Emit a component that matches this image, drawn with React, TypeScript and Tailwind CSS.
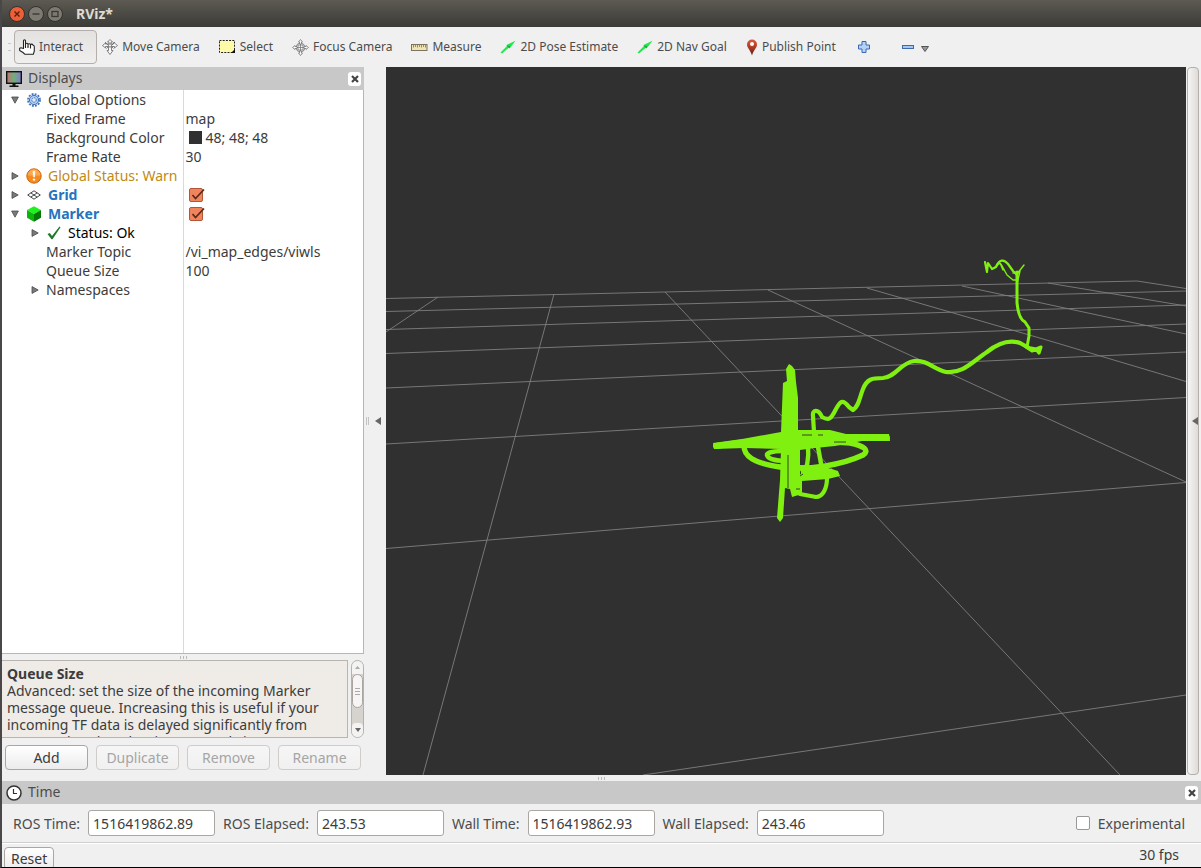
import { useState } from "react";
import type { ReactNode } from "react";

type Row = {
  name: string;
  value?: string;
  indent?: "root" | "child" | "leaf";
  arrow?: "open" | "closed";
  icon?: ReactNode;
  color?: string;
  swatch?: boolean;
  checkbox?: boolean;
};

/* ---------- Icons ---------- */

function HandIcon() {
  return (
    <svg width="16" height="16" viewBox="0 0 16 16" fill="#fff" stroke="#222" strokeWidth="1.1" strokeLinejoin="round">
      <path d="M4.5 9.500V1.800a1 1 0 0 1 2 0V6.500V5.500a1.200 1.200 0 0 1 2.500 0V7V6a1.200 1.200 0 0 1 2.500 0V7.500V6.500a1.200 1.200 0 0 1 2.500-.2c1 0 1.300.5 1.300 1.500V12l-1 3.300H6L4 13.500L.7 11.500L.6 9.300L2 8.800Z" />
      <path d="M6.500 6.500v2.500M9 7v2M11.500 7.500v2" />
    </svg>
  );
}

function MoveIcon() {
  return (
    <svg width="16" height="16" viewBox="0 0 16 16" fill="#f8f8f8" stroke="#666" strokeWidth="0.8">
      <path d="M8 .5l2.500 2.500H9v2h2.500V3.500L12.500 4l3 2.500L12.500 9V7.500H9.500v4H11L8 15.500L5 11.500h1.500v-4h-3V9L.5 6.500L3.500 4v1H7V3H5.500Z" />
      <path d="M5 5l3 3l3-3M3 3l2 2M13 3l-2 2M4.500 9.500l2-2M11.500 9.500l-2-2" fill="none" />
      <circle cx="8" cy="6.500" r="1.600" />
    </svg>
  );
}

function SelectIcon() {
  return (
    <svg width="17" height="14" viewBox="0 0 17 14">
      <rect x="0.500" y="0.500" width="15" height="12" fill="#fdfba8" />
      <rect x="0.500" y="0.500" width="15" height="12" fill="none" stroke="#222" strokeDasharray="2 1.200" />
      <path d="M12 13h4V9Z" fill="#111" />
    </svg>
  );
}

function FocusIcon() {
  return (
    <svg width="17" height="17" viewBox="0 0 17 17" fill="#fafafa" stroke="#777" strokeWidth="0.8">
      <circle cx="8.500" cy="8.500" r="4.500" />
      <path d="M8.500 4.500v8M4.500 8.500h8M6 5.500v6M11 5.500v6M5.500 6h6M5.500 11h6" />
      <path d="M8.500 .5l2 2.500h-1v2h-2V3h-1ZM8.500 16.500l2-2.500h-1v-2h-2v2h-1ZM.5 8.500l2.500-2v1h2v2H3v1ZM16.500 8.500l-2.500-2v1h-2v2h2v1Z" />
    </svg>
  );
}

function RulerIcon() {
  return (
    <svg width="17" height="7" viewBox="0 0 17 7">
      <rect x="0.500" y="0.500" width="15.500" height="6" fill="#f2e3b4" stroke="#7c7462" />
      <path d="M2.500 1v2.500M4.500 1v2M6.500 1v2.500M8.500 1v2M10.500 1v2.500M12.500 1v2M14.500 1v2.500" stroke="#7c7462" strokeWidth="0.8" />
    </svg>
  );
}

function ArrowIcon() {
  return (
    <svg width="16" height="14" viewBox="0 0 16 14">
      <path d="M.5 12.500L7 6L6.500 5L15.500 .8L10 8L9 7.500L2 13.500Z" fill="#1fe84b" />
      <path d="M6.500 5.500L9.500 8.500L10 6Z" fill="#12a834" />
    </svg>
  );
}

function PinIcon() {
  return (
    <svg width="12" height="17" viewBox="0 0 12 17">
      <defs>
        <linearGradient id="pin" x1="0" y1="0" x2="0" y2="1">
          <stop offset="0" stopColor="#e0573c" />
          <stop offset="0.550" stopColor="#a63a22" />
          <stop offset="1" stopColor="#4b1a0e" />
        </linearGradient>
      </defs>
      <path d="M6 .5a5 5 0 0 1 5 5C11 9 7.500 11 6 16.500C4.500 11 1 9 1 5.500a5 5 0 0 1 5-5Z" fill="url(#pin)" />
      <circle cx="6" cy="5" r="2" fill="#fff" />
    </svg>
  );
}

function PlusIcon() {
  return (
    <svg width="12" height="12" viewBox="0 0 12 12">
      <path d="M4 .5h4V4h3.500v4H8v3.500H4V8H.5V4H4Z" fill="#b4d2f6" stroke="#3a67b8" />
    </svg>
  );
}

function MinusIcon() {
  return (
    <svg width="12" height="4" viewBox="0 0 12 4">
      <rect x="0.500" y="0.500" width="11" height="3" fill="#a4c6f0" stroke="#3f6aae" />
    </svg>
  );
}

function MonitorIcon() {
  return (
    <svg width="16" height="16" viewBox="0 0 16 16">
      <defs>
        <linearGradient id="screen">
          <stop offset="0" stopColor="#c87070" />
          <stop offset="0.500" stopColor="#6fae7c" />
          <stop offset="1" stopColor="#857ad0" />
        </linearGradient>
      </defs>
      <rect x="0.700" y="0.700" width="14.600" height="11.600" fill="url(#screen)" stroke="#111" strokeWidth="1.400" />
      <path d="M6.500 12.500h3v2h3V16h-9v-1.500h3Z" fill="#111" />
    </svg>
  );
}

function ClockIcon() {
  return (
    <svg width="16" height="16" viewBox="0 0 16 16" fill="#fff" stroke="#333">
      <circle cx="8" cy="8" r="7" strokeWidth="1.500" />
      <path d="M7.500 4v4.500H11" strokeWidth="1.200" />
    </svg>
  );
}

function GearIcon() {
  return (
    <svg width="14" height="14" viewBox="0 0 14 14" fill="none" stroke="#4273b8">
      <circle cx="7" cy="7" r="6" strokeWidth="1.800" strokeDasharray="1.900 1.240" />
      <circle cx="7" cy="7" r="4.600" fill="#aecbf0" />
      <circle cx="7" cy="7" r="2.200" fill="#dfeafa" strokeDasharray="1.500 0.800" />
    </svg>
  );
}

function WarnIcon() {
  return (
    <svg width="16" height="16" viewBox="0 0 16 16">
      <circle cx="8" cy="8" r="7.200" fill="#f58a1f" stroke="#c9660c" />
      <path d="M1.800 7.500a6.200 6.200 0 0 1 12.400 0Z" fill="#fba94e" />
      <path d="M7 3.200h2L8.600 9H7.400Z" fill="#fff" stroke="#fff" strokeWidth="0.500" />
      <circle cx="8" cy="11.600" r="1.200" fill="#fff" />
    </svg>
  );
}

function GridIcon() {
  return (
    <svg width="14" height="10" viewBox="0 0 14 10" fill="none" stroke="#333" strokeWidth="0.900">
      <path d="M7 .8L13.300 5L7 9.200L.7 5ZM3.800 2.900L10.200 7.100M10.200 2.900L3.800 7.100" />
    </svg>
  );
}

function CubeIcon() {
  return (
    <svg width="16" height="16" viewBox="0 0 16 16">
      <path d="M8 .3L15 4L8 8L1 4Z" fill="#1ff01f" />
      <path d="M1 4L8 8V15.700L1 11.700Z" fill="#0bb50b" />
      <path d="M15 4L8 8V15.700L15 11.700Z" fill="#067806" />
    </svg>
  );
}

function CheckIcon() {
  return (
    <svg width="14" height="14" viewBox="0 0 14 14">
      <path d="M.5 8L2.800 7L5 10L12.500 .6L13.500 1.300L5.500 13.300H4.500Z" fill="#1d7a26" />
    </svg>
  );
}

function TreeArrow({ open }: { open: boolean }) {
  return (
    <svg width="8" height="8" viewBox="0 0 8 8" fill="#7a7a7a" stroke="#4a4a4a" strokeWidth="0.800">
      {open ? <path d="M.6 1h6.800L4 7.200Z" /> : <path d="M1 .6v6.800L7.200 4Z" />}
    </svg>
  );
}

function LeftTriangle() {
  return (
    <svg width="6" height="8" viewBox="0 0 6 8">
      <path d="M6 0v8L0 4Z" fill="#666" />
    </svg>
  );
}

/* ---------- Small parts ---------- */

function CloseButton({ label }: { label: string }) {
  return (
    <button aria-label={label} className="flex h-[14px] w-[13px] items-center justify-center rounded-[3px] bg-white">
      <svg width="8" height="8" viewBox="0 0 8 8" stroke="#444" strokeWidth="2.200">
        <path d="M1 1l6 6M7 1L1 7" />
      </svg>
    </button>
  );
}

function DockHeader({ icon, title }: { icon: ReactNode; title: string }) {
  return (
    <div className="flex items-center bg-[#c8c8c8] py-px pr-[3px] pl-1">
      {icon}
      <h2 className="ml-1.5 flex-1 pb-px text-[14px] leading-5 text-[#4c4c4c]">{title}</h2>
      <CloseButton label={`Close ${title}`} />
    </div>
  );
}

function RowCheckbox({ label }: { label: string }) {
  const [checked, setChecked] = useState(true);
  return (
    <span className="relative ml-[3px] block h-[14px] w-[14px]">
      <input
        type="checkbox"
        aria-label={label}
        checked={checked}
        onChange={() => setChecked(!checked)}
        className="block h-[14px] w-[14px] appearance-none rounded-[2px] border border-[#b0563a] bg-[#f0845c]"
      />
      {checked && (
        <svg className="pointer-events-none absolute top-0 left-0 overflow-visible" width="16" height="14" viewBox="0 0 16 14">
          <path d="M3.500 7L6.500 10.500L15 1.500" fill="none" stroke="#5e2a1a" strokeWidth="1.800" />
        </svg>
      )}
    </span>
  );
}

const tools = [
  { name: "Interact", icon: <HandIcon /> },
  { name: "Move Camera", icon: <MoveIcon /> },
  { name: "Select", icon: <SelectIcon /> },
  { name: "Focus Camera", icon: <FocusIcon /> },
  { name: "Measure", icon: <RulerIcon /> },
  { name: "2D Pose Estimate", icon: <ArrowIcon /> },
  { name: "2D Nav Goal", icon: <ArrowIcon /> },
  { name: "Publish Point", icon: <PinIcon /> },
];

const rows: Row[] = [
  { name: "Global Options", arrow: "open", icon: <GearIcon /> },
  { name: "Fixed Frame", value: "map", indent: "leaf" },
  { name: "Background Color", value: "48; 48; 48", indent: "leaf", swatch: true },
  { name: "Frame Rate", value: "30", indent: "leaf" },
  { name: "Global Status: Warn", arrow: "closed", icon: <WarnIcon />, color: "text-[#c08a14]" },
  { name: "Grid", arrow: "closed", icon: <GridIcon />, color: "font-bold text-[#2673bd]", checkbox: true },
  { name: "Marker", arrow: "open", icon: <CubeIcon />, color: "font-bold text-[#2673bd]", checkbox: true },
  { name: "Status: Ok", arrow: "closed", indent: "child", icon: <CheckIcon />, color: "text-black" },
  { name: "Marker Topic", value: "/vi_map_edges/viwls", indent: "leaf" },
  { name: "Queue Size", value: "100", indent: "leaf" },
  { name: "Namespaces", arrow: "closed", indent: "child" },
];

const times = [
  { label: "ROS Time:", value: "1516419862.89" },
  { label: "ROS Elapsed:", value: "243.53" },
  { label: "Wall Time:", value: "1516419862.93" },
  { label: "Wall Elapsed:", value: "243.46" },
];

/* ---------- Sections ---------- */

function TitleBar() {
  return (
    <header className="flex h-[27px] shrink-0 items-center gap-[3px] bg-linear-to-b from-[#5c5a52] to-[#3c3b37] pl-[7px]">
      <button aria-label="Close window">
        <svg width="16" height="16" viewBox="0 0 16 16">
          <circle cx="8" cy="8" r="7.500" fill="#ec5f38" stroke="#33312d" />
          <path d="M5.500 5.500l5 5M10.500 5.500l-5 5" stroke="#5a1f0c" strokeWidth="1.400" />
        </svg>
      </button>
      <button aria-label="Minimize">
        <svg width="16" height="16" viewBox="0 0 16 16">
          <circle cx="8" cy="8" r="7.500" fill="#7d7a71" stroke="#33312d" />
          <path d="M4.500 8h7" stroke="#3a3934" strokeWidth="1.400" />
        </svg>
      </button>
      <button aria-label="Maximize">
        <svg width="16" height="16" viewBox="0 0 16 16">
          <circle cx="8" cy="8" r="7.500" fill="#7d7a71" stroke="#33312d" />
          <rect x="5" y="5.500" width="6" height="5" fill="none" stroke="#3a3934" strokeWidth="1.300" />
        </svg>
      </button>
      <h1 className="ml-2.5 text-[14px] font-bold text-[#dfdbd2]">RViz*</h1>
    </header>
  );
}

function Toolbar() {
  const [active, setActive] = useState("Interact");
  return (
    <div className="flex h-10 shrink-0 items-center pl-1.5">
      <span className="mr-[3px] h-2 w-[3px] border-y border-[#c8c8c8]" />
      {tools.map((tool) => (
        <button
          key={tool.name}
          aria-pressed={active === tool.name}
          onClick={() => setActive(tool.name)}
          className={`flex h-[34px] items-center gap-1 rounded-[4px] border pr-[13px] pl-1 text-[12px] whitespace-nowrap text-[#4c4c4c] ${
            active === tool.name ? "border-[#b4afaa] bg-linear-to-b from-[#e4e2e0] to-[#f0efee]" : "border-transparent"
          }`}
        >
          {tool.icon}
          {tool.name}
        </button>
      ))}
      <button aria-label="Add tool" className="flex h-[34px] items-center px-2">
        <PlusIcon />
      </button>
      <button aria-label="Remove tool" className="ml-4 flex h-[34px] items-center gap-[7px] px-2">
        <MinusIcon />
        <svg className="mt-1" width="8" height="6" viewBox="0 0 8 6">
          <path d="M.5 .5h7L4 5.500Z" fill="#999" stroke="#555" />
        </svg>
      </button>
    </div>
  );
}

function DisplayTree() {
  return (
    <div className="min-h-0 flex-1 overflow-hidden border-r border-b border-[#b6b6b6] bg-white">
      <table className="h-full w-full table-fixed border-collapse text-left text-[14px] leading-[19px] text-[#3c3c3c]">
        <colgroup>
          <col className="w-[181px]" />
          <col />
        </colgroup>
        <tbody>
          {rows.map((row) => (
            <tr key={row.name} className="h-[19px]">
              <th scope="row" className="border-r border-[#dadada] p-0 font-normal">
                <div
                  className={`flex h-[19px] items-center whitespace-nowrap ${
                    row.indent === "leaf" ? "pl-11" : row.indent === "child" ? "pl-[29px]" : "pl-[9px]"
                  }`}
                >
                  {row.arrow && <TreeArrow open={row.arrow === "open"} />}
                  {row.icon && <span className="ml-1.5 flex w-[18px] justify-center">{row.icon}</span>}
                  <span className={`${row.arrow ? (row.icon ? "ml-[5px]" : "ml-[7px]") : ""} ${row.color ?? ""}`}>
                    {row.name}
                  </span>
                </div>
              </th>
              <td className="p-0 pl-0.5">
                {row.checkbox && <RowCheckbox label={`Enable ${row.name}`} />}
                {row.value && (
                  <span className="flex h-[19px] items-center">
                    {row.swatch && <span className="mr-1 ml-[3px] h-[13px] w-[13px] bg-[#303030]" />}
                    {row.value}
                  </span>
                )}
              </td>
            </tr>
          ))}
          <tr>
            <td className="border-r border-[#dadada]" />
            <td />
          </tr>
        </tbody>
      </table>
    </div>
  );
}

function Description() {
  return (
    <div className="flex h-[78px] shrink-0 gap-[3px]">
      <div className="flex-1 overflow-hidden border border-l-0 border-[#b9b4af] bg-[#efebe7] pt-1 pl-[5px] text-[14px] leading-[17px] whitespace-nowrap text-[#3c3c3c]">
        <h3 className="font-bold">Queue Size</h3>
        <p>
          Advanced: set the size of the incoming Marker
          <br />
          message queue. Increasing this is useful if your
          <br />
          incoming TF data is delayed significantly from
          <br />
          your Marker data, but it can greatly increase
        </p>
      </div>
      <div className="flex w-[13px] flex-col items-center overflow-hidden rounded-full border border-[#b5b1ad] bg-[#d6d2ce]">
        <span className="flex h-[13px] w-full items-center justify-center bg-[#f4f3f2]">
          <svg width="5" height="3" viewBox="0 0 5 3">
            <path d="M0 3h5L2.500 0Z" fill="#aaa" />
          </svg>
        </span>
        <span className="flex h-[34px] w-full flex-col items-center justify-center gap-0.5 rounded-full border border-[#a9a5a1] bg-[#f6f5f4]">
          <span className="h-px w-[5px] bg-[#aaa]" />
          <span className="h-px w-[5px] bg-[#aaa]" />
          <span className="h-px w-[5px] bg-[#aaa]" />
        </span>
        <span className="mt-auto flex h-[14px] w-full items-center justify-center rounded-t-[4px] bg-[#f4f3f2]">
          <svg width="6" height="4" viewBox="0 0 6 4">
            <path d="M0 0h6L3 4Z" fill="#666" />
          </svg>
        </span>
      </div>
    </div>
  );
}

function DisplaysPanel() {
  return (
    <aside className="flex w-[362px] shrink-0 flex-col">
      <DockHeader icon={<MonitorIcon />} title="Displays" />
      <DisplayTree />
      <div className="flex h-1.5 shrink-0 items-center justify-center gap-0.5">
        <span className="h-[3px] w-px bg-[#bbb]" />
        <span className="h-[3px] w-px bg-[#bbb]" />
        <span className="h-[3px] w-px bg-[#bbb]" />
      </div>
      <Description />
      <div className="grid shrink-0 grid-cols-4 gap-2 pt-[7px] pr-[3px] pb-[5px] pl-[3px] text-[14px]">
        {["Add", "Duplicate", "Remove", "Rename"].map((name) => (
          <button
            key={name}
            disabled={name !== "Add"}
            className="h-[25px] rounded-[4px] border border-[#aaa6a2] bg-linear-to-b from-white to-[#ececec] leading-[22px] text-[#3c3c3c] disabled:border-[#cfccc9] disabled:from-[#f6f6f6] disabled:to-[#f1f0f0] disabled:text-[#a5a5a5]"
          >
            {name}
          </button>
        ))}
      </div>
    </aside>
  );
}

function SceneView() {
  return (
    <main className="min-w-0 flex-1 overflow-hidden bg-[#303030]">
      <svg className="block h-full w-full" viewBox="386 67 800 708" preserveAspectRatio="xMidYMid slice" fill="none">
        {/* ground grid */}
        <g stroke="#7f7f7f" strokeWidth="0.900">
          <path d="M386 298.500L1137 281L1186 288.500" />
          <path d="M386 311.500L1186 291" />
          <path d="M386 329.500L1186 305" />
          <path d="M386 353.500L1186 324" />
          <path d="M386 388L1186 352" />
          <path d="M386 444L1186 397.500" />
          <path d="M386 548.500L1186 482.500" />
          <path d="M643 775L1186 695" />
          <path d="M438 297L386 332" />
          <path d="M554 294L423 775" />
          <path d="M665 292L1120 775" />
          <path d="M768 290L1186 482" />
          <path d="M867 288L1050 341L1186 381.500" />
          <path d="M962 286L1186 334" />
          <path d="M1048 283L1186 306" />
        </g>
        {/* trajectory */}
        <g stroke="#80f010" strokeLinecap="round" strokeLinejoin="round">
          <path d="M985 262L987 272L988 263L992 269L996 267C999 259 1004 259 1008 264L1013 271L1017 275" strokeWidth="2.200" />
          <path d="M994 268L1000 263L1003 270M1001 264L1007 275L1013 280H1018M1017 274L1024 265M1013 273L1020 271L1017 284" strokeWidth="1.400" />
          <path d="M1017 272V303C1018 313 1020 320 1025 322L1029 328V336L1027 347" strokeWidth="3" />
          <path d="M1029 348L1020 343C1008 339 997 344 987 352C971 363 962 374 946 372C933 369 928 360 914 361C900 363 896 377 883 378C872 378 867 379 863 389C859 399 859 406 853 410L849 407C842 398 840 402 836 409C831 419 829 421 822 417C818 408 812 410 813 416L814 432" strokeWidth="4.200" />
          <path d="M1026 347L1032 351L1036 349L1039 353L1041 347L1036 349L1031 348" strokeWidth="3.200" />
        </g>
        {/* dense marker cluster around the origin */}
        <g fill="#80f010">
          <path d="M786 369L789 364L792 366L795 370L796 382L798 398V430L830 430L846 434L889 434L890 441H862L835 446L815 448L800 450V474L802 478V494L792 497L790 489L785 488L783 518L780 522L777 518L780 480L781 449L745 448L714 449L713 443L742 439L770 434L781 432L783 383L787 381Z" />
          <path d="M800 465L822 466L838 471L840 476L828 479L802 481Z" />
        </g>
        <g stroke="#80f010" strokeLinecap="round" strokeLinejoin="round">
          <path d="M744 446C744 456 753 463 780 467C810 471 844 464 863 455C870 450 864 446 850 443L835 442" strokeWidth="5.400" />
          <path d="M782 451C772 451 767 453 767 455C768 459 776 461 786 461" strokeWidth="4.600" />
          <path d="M808 446C809 458 808 468 802 476M818 447L822 469" strokeWidth="4.400" />
          <path d="M827 478C827 488 823 497 816 497L800 494" strokeWidth="4.200" />
          <path d="M716 446L745 442M887 438H860" strokeWidth="6" />
        </g>
        <g stroke="#303030" strokeWidth="0.900">
          <path d="M802 435H812M818 435H823M834 442H846M788 455V488M796 489H800M800 476L803 474" />
        </g>
      </svg>
    </main>
  );
}

function TimePanel() {
  return (
    <section className="shrink-0">
      <DockHeader icon={<ClockIcon />} title="Time" />
      <form className="flex h-[39px] items-center gap-2 border-b border-[#cfcfcf] pr-4 pl-[11px] text-[14px] text-[#4c4c4c]">
        {times.map((time) => (
          <label key={time.label} className="flex items-center gap-2 whitespace-nowrap">
            {time.label}
            <input
              readOnly
              value={time.value}
              className="h-[26px] w-[127px] rounded-[3px] border border-[#aaa6a2] bg-white px-1 text-[#3c3c3c]"
            />
          </label>
        ))}
        <label className="ml-auto flex items-center gap-2">
          <input type="checkbox" className="h-[14px] w-[14px] appearance-none rounded-[2px] border border-[#999] bg-white checked:bg-[#f0845c]" />
          Experimental
        </label>
      </form>
    </section>
  );
}

export default function App() {
  return (
    <div className="flex h-screen flex-col overflow-hidden border-b border-l-2 border-b-black border-l-[#4a474a] bg-[#f0f0f0] font-['Noto_Sans',sans-serif]">
      <TitleBar />
      <Toolbar />
      <div className="flex min-h-0 flex-1">
        <DisplaysPanel />
        <button aria-label="Hide left dock" className="flex w-[22px] shrink-0 items-center justify-center gap-1.5 pr-1">
          <span className="h-2 w-[3px] border-x border-[#c4c4c4]" />
          <LeftTriangle />
        </button>
        <SceneView />
        <div className="flex w-[15px] shrink-0 pr-0.5 pl-px">
          <button
            aria-label="Hide right dock"
            className="flex flex-1 items-center justify-end rounded-[4px] border border-[#b4afaa] bg-linear-to-r from-[#f6f5f4] to-[#dedbd8]"
          >
            <LeftTriangle />
          </button>
        </div>
      </div>
      <div className="flex h-1.5 shrink-0 items-center justify-center gap-0.5">
        <span className="h-[3px] w-px bg-[#bbb]" />
        <span className="h-[3px] w-px bg-[#bbb]" />
        <span className="h-[3px] w-px bg-[#bbb]" />
      </div>
      <TimePanel />
      <footer className="flex h-6 shrink-0 items-start justify-between overflow-hidden border-t border-white pr-[22px] pl-0.5 text-[14px] text-[#3c3c3c]">
        <button className="mt-[3px] shrink-0 rounded-[4px] border border-[#aaa6a2] bg-linear-to-b from-white to-[#ececec] px-1.5 leading-[21px]">
          Reset
        </button>
        <span className="leading-[22px]">30 fps</span>
      </footer>
    </div>
  );
}
